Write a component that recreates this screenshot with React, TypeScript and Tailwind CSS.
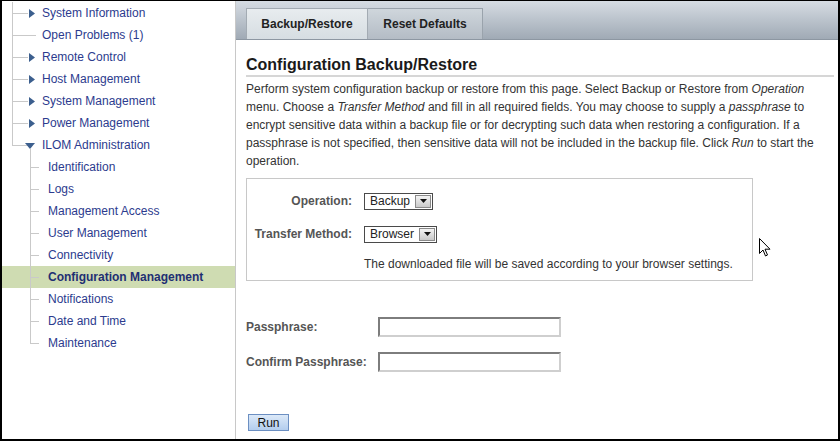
import React from 'react';

type TopItem = { label: string; arrow: 'right' | 'down' | null };

const topItems: TopItem[] = [
  { label: 'System Information', arrow: 'right' },
  { label: 'Open Problems (1)', arrow: null },
  { label: 'Remote Control', arrow: 'right' },
  { label: 'Host Management', arrow: 'right' },
  { label: 'System Management', arrow: 'right' },
  { label: 'Power Management', arrow: 'right' },
  { label: 'ILOM Administration', arrow: 'down' },
];

const subItems = [
  'Identification',
  'Logs',
  'Management Access',
  'User Management',
  'Connectivity',
  'Configuration Management',
  'Notifications',
  'Date and Time',
  'Maintenance',
];

const SELECTED = 'Configuration Management';

const TopRow: React.FC<{ item: TopItem; last: boolean }> = ({ item, last }) => (
  <div className="flex h-[22px] items-center">
    <div className="relative h-full w-[40px] shrink-0">
      <span className={`absolute left-[10px] top-0 w-px bg-[#c9c9c9] ${last ? 'h-[11px]' : 'h-full'}`} />
      <span className={`absolute left-[10px] top-[11px] h-px bg-[#c9c9c9] ${item.arrow ? 'w-[16px]' : 'w-[24px]'}`} />
      {item.arrow === 'right' && (
        <svg className="absolute left-[27px] top-[7px]" width="6" height="9" viewBox="0 0 6 9">
          <polygon points="0,0 6,4.5 0,9" fill="#3c5f8e" />
        </svg>
      )}
      {item.arrow === 'down' && (
        <>
          <svg className="absolute left-[23px] top-[9px]" width="10" height="6" viewBox="0 0 10 6">
            <polygon points="0,0 10,0 5,6" fill="#3c5f8e" />
          </svg>
          <span className="absolute left-[28px] top-[15px] h-[7px] w-px bg-[#c9c9c9]" />
        </>
      )}
    </div>
    <span className="text-[12px] text-[#2c3b8e]">{item.label}</span>
  </div>
);

const SubRow: React.FC<{ label: string; last: boolean }> = ({ label, last }) => {
  const selected = label === SELECTED;
  return (
    <div className={`flex h-[22px] items-center ${selected ? 'bg-[#cfdcb2]' : ''}`}>
      <div className="relative h-full w-[46px] shrink-0">
        <span className={`absolute left-[28px] top-0 w-px bg-[#c9c9c9] ${last ? 'h-[11px]' : 'h-full'}`} />
        <span className="absolute left-[28px] top-[11px] h-px w-[9px] bg-[#c9c9c9]" />
      </div>
      <span className={`text-[12px] ${selected ? 'font-bold text-[#1f2f73]' : 'text-[#2c3b8e]'}`}>{label}</span>
    </div>
  );
};

const Select: React.FC<{ value: string; width: string }> = ({ value, width }) => (
  <div className={`flex h-[17px] items-center justify-between border border-[#4a4a4a] bg-white pl-[5px] pr-[1px] ${width}`}>
    <span className="text-[12px] leading-none text-[#222]">{value}</span>
    <span className="flex h-[13px] w-[16px] items-center justify-center border border-[#8a8a8a] bg-gradient-to-b from-[#f4f4f4] to-[#c9c9c9]">
      <svg width="7" height="4" viewBox="0 0 7 4">
        <polygon points="0,0 7,0 3.5,4" fill="#111" />
      </svg>
    </span>
  </div>
);

const Cursor = () => (
  <svg className="absolute left-[757px] top-[237px]" width="12" height="19" viewBox="0 0 12 19">
    <path d="M0.5 0.5 L0.5 15.5 L4 12 L6.5 18 L8.5 17 L6 11.2 L11 11.2 Z" fill="#fff" stroke="#000" strokeWidth="1" strokeLinejoin="miter" />
  </svg>
);

export default function App() {
  return (
    <div className="relative flex h-[441px] w-[840px] border-2 border-t border-black bg-white font-['Liberation_Sans',Arial,sans-serif]">
      {/* Navigation tree */}
      <aside className="w-[234px] shrink-0 border-r border-[#c8c8c8] pt-[1px]">
        {topItems.map((item, i) => (
          <TopRow key={item.label} item={item} last={i === topItems.length - 1} />
        ))}
        {subItems.map((label, i) => (
          <SubRow key={label} label={label} last={i === subItems.length - 1} />
        ))}
      </aside>

      {/* Main content */}
      <main className="flex min-w-0 flex-1 flex-col">
        <div className="flex h-[39px] shrink-0 items-end border-b border-[#8d97a2] bg-gradient-to-b from-[#d6dce3] to-[#a0aab5] pl-[10px]">
          <div className="flex h-[31px] w-[122px] items-center justify-center border border-b-0 border-[#a3abb3] bg-gradient-to-b from-[#e8ecef] to-[#d6dde2] text-[12px] font-bold text-[#222]">
            Backup/Restore
          </div>
          <div className="flex h-[31px] w-[115px] items-center justify-center border border-b-0 border-l-0 border-[#9aa3ac] bg-gradient-to-b from-[#cfd6dc] to-[#b4bcc5] text-[12px] font-bold text-[#222]">
            Reset Defaults
          </div>
        </div>

        <div className="pl-[10px] pr-[4px]">
          <h1 className="mt-[15px] border-b-2 border-[#d6d6d6] pb-[1px] text-[16px] font-bold leading-[19px] text-[#1a1a1a]">
            Configuration Backup/Restore
          </h1>
          <p className="mt-[3px] w-[588px] text-[12px] leading-[18px] text-[#333]">
            Perform system configuration backup or restore from this page. Select Backup or Restore from <i>Operation</i> menu. Choose a <i>Transfer Method</i> and fill in all required fields. You may choose to supply a <i>passphrase</i> to encrypt sensitive data within a backup file or for decrypting such data when restoring a configuration. If a passphrase is not specified, then sensitive data will not be included in the backup file. Click <i>Run</i> to start the operation.
          </p>

          <div className="mt-[8px] h-[103px] w-[507px] border border-[#c8c8c8] pt-[13px]">
            <div className="flex items-center gap-[12px]">
              <span className="w-[105px] text-right text-[12px] font-bold text-[#555]">Operation:</span>
              <Select value="Backup" width="w-[69px]" />
            </div>
            <div className="mt-[15px] flex items-center gap-[12px]">
              <span className="w-[105px] text-right text-[12px] font-bold text-[#555]">Transfer Method:</span>
              <Select value="Browser" width="w-[73px]" />
            </div>
            <p className="mt-[14px] pl-[117px] text-[12px] leading-[14px] text-[#333]">
              The downloaded file will be saved according to your browser settings.
            </p>
          </div>

          <div className="mt-[36px] flex items-center">
            <span className="w-[132px] text-[12px] font-bold text-[#555]">Passphrase:</span>
            <input className="h-[20px] w-[183px] border-2 border-[#7d7d7d] border-b-[#cfcfcf] border-r-[#cfcfcf] bg-white" type="password" />
          </div>
          <div className="mt-[15px] flex items-center">
            <span className="w-[132px] text-[12px] font-bold text-[#555]">Confirm Passphrase:</span>
            <input className="h-[20px] w-[183px] border-2 border-[#7d7d7d] border-b-[#cfcfcf] border-r-[#cfcfcf] bg-white" type="password" />
          </div>

          <button
            type="button"
            className="ml-[2px] mt-[42px] flex h-[17px] w-[41px] items-center justify-center border border-[#6c8fc2] bg-gradient-to-b from-[#dce9f8] to-[#b3cdee] text-[12px] text-[#111]"
          >
            Run
          </button>
        </div>
      </main>

      <Cursor />
    </div>
  );
}
